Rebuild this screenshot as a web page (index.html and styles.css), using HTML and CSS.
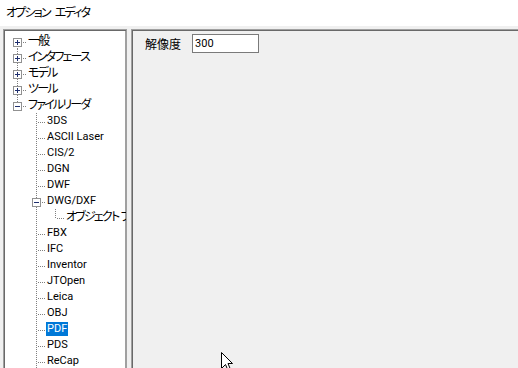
FILE: index.html
```html
<!DOCTYPE html>
<html lang="ja">
<head>
    <meta charset="UTF-8">
    <title>オプション エディタ</title>
    <link rel="stylesheet" href="styles.css">
</head>
<body>
    <div class="window">
        <div class="title">オプション エディタ</div>

        <div class="main">
            <div class="tree">
                <div class="row"><span class="cell first"><i class="box plus"></i></span><span class="label jp">一般</span></div>
                <div class="row"><span class="cell tee"><i class="box plus"></i></span><span class="label jp">インタフェース</span></div>
                <div class="row"><span class="cell tee"><i class="box plus"></i></span><span class="label jp">モデル</span></div>
                <div class="row"><span class="cell tee"><i class="box plus"></i></span><span class="label jp">ツール</span></div>
                <div class="row"><span class="cell last"><i class="box minus"></i></span><span class="label jp">ファイルリーダ</span></div>

                <div class="row"><span class="cell"></span><span class="cell tee"></span><span class="label">3DS</span></div>
                <div class="row"><span class="cell"></span><span class="cell tee"></span><span class="label">ASCII Laser</span></div>
                <div class="row"><span class="cell"></span><span class="cell tee"></span><span class="label">CIS/2</span></div>
                <div class="row"><span class="cell"></span><span class="cell tee"></span><span class="label">DGN</span></div>
                <div class="row"><span class="cell"></span><span class="cell tee"></span><span class="label">DWF</span></div>
                <div class="row"><span class="cell"></span><span class="cell tee"><i class="box minus"></i></span><span class="label">DWG/DXF</span></div>
                <div class="row"><span class="cell"></span><span class="cell pipe"></span><span class="cell last"></span><span class="label jp">オブジェクト フィルタ</span></div>
                <div class="row"><span class="cell"></span><span class="cell tee"></span><span class="label">FBX</span></div>
                <div class="row"><span class="cell"></span><span class="cell tee"></span><span class="label">IFC</span></div>
                <div class="row"><span class="cell"></span><span class="cell tee"></span><span class="label">Inventor</span></div>
                <div class="row"><span class="cell"></span><span class="cell tee"></span><span class="label">JTOpen</span></div>
                <div class="row"><span class="cell"></span><span class="cell tee"></span><span class="label">Leica</span></div>
                <div class="row"><span class="cell"></span><span class="cell tee"></span><span class="label">OBJ</span></div>
                <div class="row"><span class="cell"></span><span class="cell tee"></span><span class="label selected">PDF</span></div>
                <div class="row"><span class="cell"></span><span class="cell tee"></span><span class="label">PDS</span></div>
                <div class="row"><span class="cell"></span><span class="cell tee"></span><span class="label">ReCap</span></div>
                <div class="row"><span class="cell"></span><span class="cell tee"></span><span class="label">Revit</span></div>
            </div>

            <div class="panel">
                <div class="field">
                    <span class="field-label">解像度</span>
                    <input class="field-input" type="text" value="300">
                </div>
            </div>
        </div>

        <svg class="cursor" width="12" height="19" viewBox="0 0 12 19">
            <path d="M0.5 0.5 L0.5 16.5 L4.5 12.5 L7 18.5 L9.5 17.5 L7 11.5 L11.5 11.5 Z" fill="#fff" stroke="#000" stroke-width="1"/>
        </svg>
    </div>
</body>
</html>
```

FILE: styles.css
```css
* {
    box-sizing: border-box;
}

body {
    margin: 0;
    font-family: Roboto, "Noto Sans CJK JP", sans-serif;
    font-size: 11px;
    font-feature-settings: "palt";
    color: #000;
}

.window {
    width: 518px;
    height: 368px;
    position: relative;
    overflow: hidden;
    background: #f0f0f0;
}

.title {
    height: 26px;
    padding: 4px 0 0 6px;
    line-height: 16px;
    background: #fff;
    font-family: "Noto Sans CJK JP", sans-serif;
    font-size: 12px;
    letter-spacing: -1.8px;
    word-spacing: 4px;
}

.main {
    display: flex;
    gap: 4px;
    padding: 3px 0 0 3px;
}

.tree {
    width: 124px;
    height: 420px;
    padding: 3px 0 0 4px;
    background: #fff;
    border: 1px solid #a0a0a0;
    box-shadow: inset 1px 1px 0 #696969, inset -1px 0 0 #a0a0a0;
    overflow: hidden;
    white-space: nowrap;
}

.row {
    height: 16px;
    display: flex;
    align-items: center;
}

.cell {
    width: 19px;
    height: 16px;
    flex: none;
    position: relative;
}

/* tree guide lines: 1px on / 1px off */
.cell.first::before,
.cell.tee::before,
.cell.last::before,
.cell.pipe::before {
    content: "";
    position: absolute;
    left: 9px;
    top: 0;
    width: 1px;
    height: 16px;
    background: linear-gradient(to bottom, #808080 50%, transparent 50%) 0 0 / 1px 2px repeat-y;
}

.cell.first::before {
    top: 9px;
    height: 7px;
}

.cell.last::before {
    height: 10px;
}

.cell.first::after,
.cell.tee::after,
.cell.last::after {
    content: "";
    position: absolute;
    left: 11px;
    top: 9px;
    width: 7px;
    height: 1px;
    background: linear-gradient(to right, #808080 50%, transparent 50%) 0 0 / 2px 1px repeat-x;
}

.box {
    position: absolute;
    left: 5px;
    top: 5px;
    width: 9px;
    height: 9px;
    border: 1px solid #919191;
    background: #fff;
    z-index: 1;
}

.box::before {
    content: "";
    position: absolute;
    left: 1px;
    top: 3px;
    width: 5px;
    height: 1px;
    background: #1f2f6e;
}

.box.plus::after {
    content: "";
    position: absolute;
    left: 3px;
    top: 1px;
    width: 1px;
    height: 5px;
    background: #1f2f6e;
}

.label {
    padding: 0 1px;
    line-height: 14px;
}

.label.jp {
    font-size: 12px;
    letter-spacing: -1.8px;
    word-spacing: 1px;
}

.label.selected {
    background: #0078d7;
    color: #fff;
}

.panel {
    flex: 1;
    height: 420px;
    border-top: 1px solid #a0a0a0;
    border-left: 1px solid #a0a0a0;
    box-shadow: inset 1px 1px 0 #696969;
    padding: 4px 0 0 13px;
}

.field {
    display: flex;
    align-items: center;
    gap: 11px;
}

.field-label {
    font-family: "Noto Sans CJK JP", sans-serif;
    font-size: 12px;
}

.field-input {
    width: 67px;
    height: 19px;
    margin: 0;
    padding: 0 2px;
    border: 1px solid #7a7a7a;
    background: #fff;
    font-family: Roboto, sans-serif;
    font-size: 11px;
    color: #000;
    outline: none;
}

.cursor {
    position: absolute;
    left: 221px;
    top: 352px;
}
```
